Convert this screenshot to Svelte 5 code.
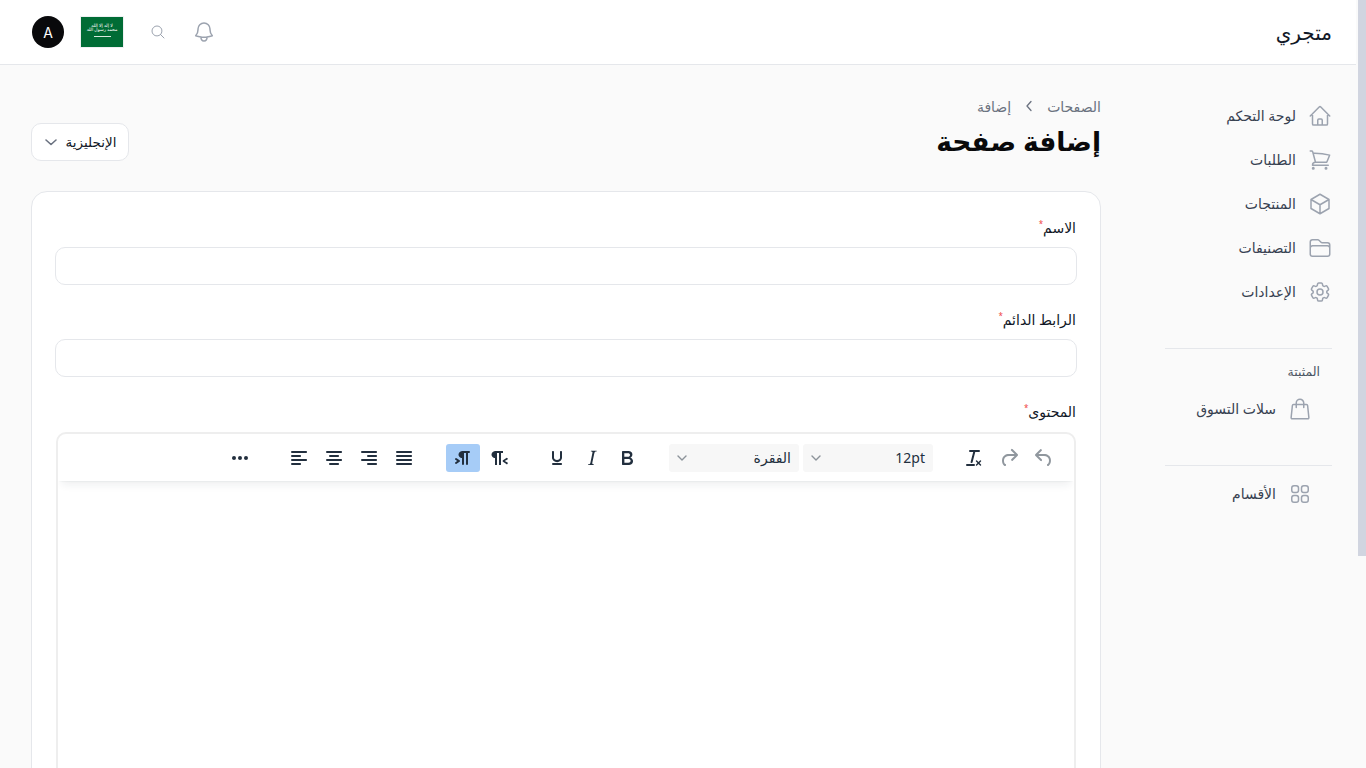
<script>
	const nav = [
		{ label: 'لوحة التحكم', d: 'm2.25 12 8.954-8.955c.44-.439 1.152-.439 1.591 0L21.75 12M4.5 9.75v10.125c0 .621.504 1.125 1.125 1.125H9.75v-4.875c0-.621.504-1.125 1.125-1.125h2.25c.621 0 1.125.504 1.125 1.125V21h4.125c.621 0 1.125-.504 1.125-1.125V9.75M8.25 21h8.25' },
		{ label: 'الطلبات', d: 'M2.25 3h1.386c.51 0 .955.343 1.087.835l.383 1.437M7.5 14.25a3 3 0 0 0-3 3h15.75m-12.75-3h11.218c1.121-2.3 2.1-4.684 2.924-7.138a60.114 60.114 0 0 0-16.536-1.84M7.5 14.25 5.106 5.272M6 20.25a.75.75 0 1 1-1.5 0 .75.75 0 0 1 1.5 0Zm12.75 0a.75.75 0 1 1-1.5 0 .75.75 0 0 1 1.5 0Z' },
		{ label: 'المنتجات', d: 'm21 7.5-9-5.25L3 7.5m18 0-9 5.25m9-5.25v9l-9 5.25M3 7.5l9 5.25M3 7.5v9l9 5.25m0-9v9' },
		{ label: 'التصنيفات', d: 'M2.25 12.75V12A2.25 2.25 0 0 1 4.5 9.75h15A2.25 2.25 0 0 1 21.75 12v.75m-8.69-6.44-2.12-2.12a1.5 1.5 0 0 0-1.061-.44H4.5A2.25 2.25 0 0 0 2.25 6v12a2.25 2.25 0 0 0 2.25 2.25h15A2.25 2.25 0 0 0 21.75 18V9a2.25 2.25 0 0 0-2.25-2.25h-5.379a1.5 1.5 0 0 1-1.06-.44Z' },
		{ label: 'الإعدادات', d: 'M9.594 3.94c.09-.542.56-.94 1.11-.94h2.593c.55 0 1.02.398 1.11.94l.213 1.281c.063.374.313.686.645.87.074.04.147.083.22.127.325.196.72.257 1.075.124l1.217-.456a1.125 1.125 0 0 1 1.37.49l1.296 2.247a1.125 1.125 0 0 1-.26 1.431l-1.003.827c-.293.241-.438.613-.43.992a7.723 7.723 0 0 1 0 .255c-.008.378.137.75.43.991l1.004.827c.424.35.534.955.26 1.43l-1.298 2.247a1.125 1.125 0 0 1-1.369.491l-1.217-.456c-.355-.133-.75-.072-1.076.124a6.47 6.47 0 0 1-.22.128c-.331.183-.581.495-.644.869l-.213 1.281c-.09.543-.56.94-1.11.94h-2.594c-.55 0-1.019-.398-1.11-.94l-.213-1.281c-.062-.374-.312-.686-.644-.87a6.52 6.52 0 0 1-.22-.127c-.325-.196-.72-.257-1.076-.124l-1.217.456a1.125 1.125 0 0 1-1.369-.49l-1.297-2.247a1.125 1.125 0 0 1 .26-1.431l1.004-.827c.292-.24.437-.613.43-.991a6.932 6.932 0 0 1 0-.255c.007-.38-.138-.751-.43-.992l-1.004-.827a1.125 1.125 0 0 1-.26-1.43l1.297-2.247a1.125 1.125 0 0 1 1.37-.491l1.216.456c.356.133.751.072 1.076-.124.072-.044.146-.086.22-.128.332-.183.582-.495.644-.869l.214-1.28Z M15 12a3 3 0 1 1-6 0 3 3 0 0 1 6 0Z' }
	];
	const bag = 'M15.75 10.5V6a3.75 3.75 0 1 0-7.5 0v4.5m11.356-1.993 1.263 12c.07.665-.45 1.243-1.119 1.243H4.25a1.125 1.125 0 0 1-1.12-1.243l1.264-12A1.125 1.125 0 0 1 5.513 7.5h12.974c.576 0 1.059.435 1.119 1.007Z';
	const squares = 'M3.75 6A2.25 2.25 0 0 1 6 3.75h2.25A2.25 2.25 0 0 1 10.5 6v2.25a2.25 2.25 0 0 1-2.25 2.25H6a2.25 2.25 0 0 1-2.25-2.25V6ZM3.75 15.75A2.25 2.25 0 0 1 6 13.5h2.25a2.25 2.25 0 0 1 2.25 2.25V18a2.25 2.25 0 0 1-2.25 2.25H6A2.25 2.25 0 0 1 3.75 18v-2.25ZM13.5 6a2.25 2.25 0 0 1 2.25-2.25H18A2.25 2.25 0 0 1 20.25 6v2.25A2.25 2.25 0 0 1 18 10.5h-2.25a2.25 2.25 0 0 1-2.25-2.25V6ZM13.5 15.75a2.25 2.25 0 0 1 2.25-2.25H18a2.25 2.25 0 0 1 2.25 2.25V18A2.25 2.25 0 0 1 18 20.25h-2.25A2.25 2.25 0 0 1 13.5 18v-2.25Z';

	// editor toolbar, tinymce icons, 24 grid
	const history = [
		{ d: 'M6.4 8H12c3.7 0 6.2 2 6.8 5.1.6 2.7-.4 5.6-2.3 6.8a1 1 0 0 1-1-1.8c1.1-.6 1.8-2.7 1.4-4.6-.5-2.1-2.1-3.5-4.9-3.5H6.4l3.3 3.3a1 1 0 1 1-1.4 1.4l-5-5a1 1 0 0 1 0-1.4l5-5a1 1 0 0 1 1.4 1.4L6.4 8Z', off: true },
		{ d: 'M17.6 10H12c-2.8 0-4.4 1.4-4.9 3.5-.4 2 .3 4 1.4 4.6a1 1 0 1 1-1 1.8c-2-1.2-2.9-4.1-2.3-6.8.6-3 3-5.1 6.8-5.1h5.6l-3.3-3.3a1 1 0 1 1 1.4-1.4l5 5a1 1 0 0 1 0 1.4l-5 5a1 1 0 0 1-1.4-1.4l3.3-3.3Z', off: true },
		{ d: 'M13.2 6a1 1 0 0 1 0 .2l-2.6 10a1 1 0 0 1-1 .8h-.2a.8.8 0 0 1-.8-1l2.6-10H8a1 1 0 1 1 0-2h9a1 1 0 0 1 0 2h-3.8ZM5 18h7a1 1 0 0 1 0 2H5a1 1 0 0 1 0-2Zm13 1.5L16.5 18 15 19.5a.7.7 0 0 1-1-1l1.5-1.5-1.5-1.5a.7.7 0 0 1 1-1l1.5 1.5 1.5-1.5a.7.7 0 0 1 1 1L17.5 17l1.5 1.5a.7.7 0 0 1-1 1Z' }
	];
	const inline = [
		{ d: 'M7.8 19c-.3 0-.5 0-.6-.2l-.2-.5V5.7c0-.2 0-.4.2-.5l.6-.2h5c1.5 0 2.7.3 3.5 1 .7.6 1.1 1.4 1.1 2.5a3 3 0 0 1-.6 1.9c-.4.6-1 1-1.6 1.2.4.1.9.3 1.3.6s.8.7 1 1.2c.4.4.5 1 .5 1.6 0 1.3-.4 2.3-1.3 3-.8.7-2.1 1-3.8 1H7.8Zm5-8.3c.6 0 1.2-.1 1.6-.5.4-.3.6-.7.6-1.3 0-1.1-.8-1.7-2.3-1.7H9.3v3.5h3.4Zm.5 6c.7 0 1.3-.1 1.7-.4.4-.4.6-.9.6-1.5s-.2-1-.7-1.4c-.4-.3-1-.4-2-.4H9.4v3.8h4Z' },
		{ d: 'M16.7 4.7l-.1.9h-.3c-.6 0-1 0-1.4.3-.3.3-.4.6-.5 1.1l-2.1 9.8v.6c0 .5.4.8 1.4.8h.2l-.2.8H8l.2-.8h.2c1.1 0 1.8-.5 2-1.5l2-9.8.1-.5c0-.6-.4-.8-1.4-.8h-.3l.2-.9h5.8Z' },
		{ d: 'M16 5c.6 0 1 .4 1 1v5.5a4 4 0 0 1-.4 1.8l-1 1.4a5.3 5.3 0 0 1-5.5 1 5 5 0 0 1-1.6-1c-.5-.4-.8-.9-1.1-1.4a4 4 0 0 1-.4-1.8V6c0-.6.4-1 1-1s1 .4 1 1v5.5c0 .3 0 .6.2 1l.6.7a3.3 3.3 0 0 0 2.2.8 3.4 3.4 0 0 0 2.2-.8c.3-.2.4-.5.6-.8l.2-.9V6c0-.6.4-1 1-1ZM8 17h8c.6 0 1 .4 1 1s-.4 1-1 1H8a1 1 0 0 1 0-2Z' }
	];
	const direction = [
		{ d: 'M8 5h8v2h-2v12h-2V7h-2v12H8v-7c-.5 0-1 0-1.4-.3A3.4 3.4 0 0 1 4.8 10a3.3 3.3 0 0 1 0-2.8 3.4 3.4 0 0 1 1.8-1.8L8 5Zm12 11.2a1 1 0 1 1-1 1.6l-3-2a1 1 0 0 1 0-1.6l3-2a1 1 0 1 1 1 1.6L17.7 15l2.3 1.2Z' },
		{ d: 'M11 5h7a1 1 0 0 1 0 2h-1v11a1 1 0 0 1-2 0V7h-2v11a1 1 0 0 1-2 0v-6c-.5 0-1 0-1.4-.3A3.4 3.4 0 0 1 7.8 10a3.3 3.3 0 0 1 0-2.8 3.4 3.4 0 0 1 1.8-1.8L11 5ZM4.4 16.2 6.2 15l-1.8-1.2a1 1 0 0 1 1.2-1.6l3 2a1 1 0 0 1 0 1.6l-3 2a1 1 0 1 1-1.2-1.6Z', active: true }
	];
	const align = [
		{ d: 'M5 5h14c.6 0 1 .4 1 1s-.4 1-1 1H5a1 1 0 1 1 0-2Zm0 4h14c.6 0 1 .4 1 1s-.4 1-1 1H5a1 1 0 1 1 0-2Zm0 4h14c.6 0 1 .4 1 1s-.4 1-1 1H5a1 1 0 0 1 0-2Zm0 4h14c.6 0 1 .4 1 1s-.4 1-1 1H5a1 1 0 0 1 0-2Z' },
		{ d: 'M5 5h14c.6 0 1 .4 1 1s-.4 1-1 1H5a1 1 0 1 1 0-2Zm6 4h8c.6 0 1 .4 1 1s-.4 1-1 1h-8a1 1 0 0 1 0-2Zm0 8h8c.6 0 1 .4 1 1s-.4 1-1 1h-8a1 1 0 0 1 0-2Zm-6-4h14c.6 0 1 .4 1 1s-.4 1-1 1H5a1 1 0 0 1 0-2Z' },
		{ d: 'M5 5h14c.6 0 1 .4 1 1s-.4 1-1 1H5a1 1 0 1 1 0-2Zm3 4h8c.6 0 1 .4 1 1s-.4 1-1 1H8a1 1 0 1 1 0-2Zm0 8h8c.6 0 1 .4 1 1s-.4 1-1 1H8a1 1 0 0 1 0-2Zm-3-4h14c.6 0 1 .4 1 1s-.4 1-1 1H5a1 1 0 0 1 0-2Z' },
		{ d: 'M5 5h14c.6 0 1 .4 1 1s-.4 1-1 1H5a1 1 0 1 1 0-2Zm0 4h8c.6 0 1 .4 1 1s-.4 1-1 1H5a1 1 0 1 1 0-2Zm0 8h8c.6 0 1 .4 1 1s-.4 1-1 1H5a1 1 0 0 1 0-2Zm0-4h14c.6 0 1 .4 1 1s-.4 1-1 1H5a1 1 0 0 1 0-2Z' }
	];
	const more = 'M6 10a2 2 0 0 0-2 2c0 1.1.9 2 2 2a2 2 0 0 0 2-2 2 2 0 0 0-2-2Zm12 0a2 2 0 0 0-2 2c0 1.1.9 2 2 2a2 2 0 0 0 2-2 2 2 0 0 0-2-2Zm-6 0a2 2 0 0 0-2 2c0 1.1.9 2 2 2a2 2 0 0 0 2-2 2 2 0 0 0-2-2Z';
</script>

{#snippet outline(d, size)}
	<svg class="outline" width={size} height={size} viewBox="0 0 24 24" fill="none" stroke="currentColor" stroke-width="1.5" stroke-linecap="round" stroke-linejoin="round"><path {d} /></svg>
{/snippet}

{#snippet tbtn(b)}
	<button class="tbtn" class:active={b.active} class:off={b.off} type="button">
		<svg width="24" height="24" viewBox="0 0 24 24" fill="currentColor"><path d={b.d} /></svg>
	</button>
{/snippet}

{#snippet chevron()}
	<svg class="chev" width="10" height="10" viewBox="0 0 10 10" fill="none" stroke="currentColor" stroke-width="1.4" stroke-linecap="round" stroke-linejoin="round"><path d="M1 3l4 4 4-4" /></svg>
{/snippet}

<div class="page" dir="rtl">
	<header class="topbar">
		<span class="brand">متجري</span>
		<div class="actions">
			<span class="bell">{@render outline('M14.857 17.082a23.848 23.848 0 0 0 5.454-1.31A8.967 8.967 0 0 1 18 9.75V9A6 6 0 0 0 6 9v.75a8.967 8.967 0 0 1-2.312 6.022c1.733.64 3.56 1.085 5.455 1.31m5.714 0a24.255 24.255 0 0 1-5.714 0m5.714 0a3 3 0 1 1-5.714 0', 24)}</span>
			<span class="search">{@render outline('m21 21-5.197-5.197m0 0A7.5 7.5 0 1 0 5.196 5.196a7.5 7.5 0 0 0 10.607 10.607Z', 16)}</span>
			<span class="flag">
				<span class="shahada">لا إله إلا الله<br />محمد رسول الله</span>
				<span class="sword"></span>
			</span>
			<span class="avatar">A</span>
		</div>
	</header>

	<div class="layout">
		<aside class="sidebar">
			<nav class="nav">
				{#each nav as item}
					<a class="nav-item" href="#top">
						{@render outline(item.d, 24)}
						<span>{item.label}</span>
					</a>
				{/each}
			</nav>
			<hr />
			<div class="pinned">
				<div class="pinned-title">المثبتة</div>
				<a class="nav-item sub" href="#top">
					{@render outline(bag, 24)}
					<span>سلات التسوق</span>
				</a>
			</div>
			<hr class="second" />
			<a class="nav-item sub" href="#top">
				{@render outline(squares, 24)}
				<span>الأقسام</span>
			</a>
		</aside>

		<main class="main">
			<div class="head">
				<div>
					<div class="crumbs">
						<span>الصفحات</span>
						<svg width="16" height="16" viewBox="0 0 16 16" fill="none" stroke="currentColor" stroke-width="1.3" stroke-linecap="round" stroke-linejoin="round"><path d="M10 3.5 6 8l4 4.5" /></svg>
						<span>إضافة</span>
					</div>
					<h1>إضافة صفحة</h1>
				</div>
				<button class="lang" type="button">
					<span>الإنجليزية</span>
					<svg width="14" height="14" viewBox="0 0 14 14" fill="none" stroke="#6b7280" stroke-width="1.6" stroke-linecap="round" stroke-linejoin="round"><path d="M2 5l5 4.5L12 5" /></svg>
				</button>
			</div>

			<section class="card">
				<label class="field">
					<span class="label">الاسم<i>*</i></span>
					<input type="text" />
				</label>
				<label class="field">
					<span class="label">الرابط الدائم<i>*</i></span>
					<input type="text" />
				</label>
				<div class="field">
					<span class="label">المحتوى<i>*</i></span>
					<div class="editor">
						<div class="toolbar">
							<div class="group">
								{#each history as b}{@render tbtn(b)}{/each}
							</div>
							<div class="group selects">
								<div class="select size"><span>12pt</span>{@render chevron()}</div>
								<div class="select"><span>الفقرة</span>{@render chevron()}</div>
							</div>
							<div class="group sep">
								{#each inline as b}{@render tbtn(b)}{/each}
							</div>
							<div class="group dir">
								{#each direction as b}{@render tbtn(b)}{/each}
							</div>
							<div class="group sep">
								{#each align as b}{@render tbtn(b)}{/each}
							</div>
							<div class="group sep">
								{@render tbtn({ d: more })}
							</div>
						</div>
						<div class="body"></div>
					</div>
				</div>
			</section>
		</main>
	</div>
</div>
<div class="scrollbar"></div>

<style>
	:global(body) {
		background: #fafafa;
		font-family: 'Noto Sans', 'DejaVu Sans', sans-serif;
	}

	.page {
		color: #111827;
		padding-right: 10px;
	}
	/* the page's scrollbar, which the headless browser does not paint */
	.scrollbar {
		position: fixed;
		top: 0;
		right: 0;
		width: 8px;
		height: 556px;
		background: #d1d5e0;
	}

	.topbar {
		height: 64px;
		display: flex;
		align-items: center;
		justify-content: space-between;
		padding: 0 24px 0 32px;
		background: #fff;
		border-bottom: 1px solid #e5e7eb;
	}
	.brand {
		font-size: 20px;
		font-weight: 500;
	}
	.actions {
		display: flex;
		align-items: center;
	}
	.bell {
		display: flex;
		color: #9ca3af;
		margin-inline-end: 26px;
	}
	.search {
		display: flex;
		color: #6b7280;
		margin-inline-end: 26px;
	}
	.flag {
		width: 44px;
		height: 32px;
		margin-inline-end: 16px;
		background: #006c35;
		border: 1px solid #eef0f2;
		box-sizing: border-box;
		display: flex;
		flex-direction: column;
		align-items: center;
		gap: 5px;
		padding-top: 6px;
	}
	.shahada {
		color: #fff;
		font-size: 4.5px;
		line-height: 4px;
		white-space: nowrap;
		text-align: center;
	}
	.sword {
		width: 17px;
		height: 1px;
		background: #d8e8de;
	}
	.avatar {
		width: 32px;
		height: 32px;
		border-radius: 50%;
		background: #09090b;
		color: #fff;
		display: flex;
		align-items: center;
		justify-content: center;
		font-family: Inter, sans-serif;
		font-size: 14px;
	}

	.layout {
		display: flex;
		gap: 64px;
		padding-inline-start: 24px;
		padding-inline-end: 31px;
	}
	.sidebar {
		width: 167px;
		flex: none;
		padding-top: 33px;
	}
	.nav {
		display: flex;
		flex-direction: column;
		gap: 8px;
	}
	.nav-item {
		height: 36px;
		display: flex;
		align-items: center;
		gap: 12px;
		color: #374151;
		text-decoration: none;
		font-size: 14px;
	}
	.nav-item span {
		padding-bottom: 2px;
	}
	.outline {
		color: #9ca3af;
		flex: none;
	}
	.sidebar hr {
		border: 0;
		border-top: 1px solid #e5e7eb;
		margin: 38px 0 0;
	}
	.sidebar hr.second {
		margin-top: 38px;
	}
	.pinned-title {
		font-size: 12.5px;
		font-weight: 500;
		color: #4b5563;
		margin: 15px 12px 0 0;
		line-height: 16px;
	}
	.sub {
		padding-inline-start: 20px;
	}
	.pinned .sub {
		margin-top: 11px;
	}
	hr.second + .sub {
		margin-top: 10px;
	}

	.main {
		flex: 1;
		min-width: 0;
		padding-top: 29px;
		padding-bottom: 32px;
	}
	.head {
		display: flex;
		align-items: flex-end;
		justify-content: space-between;
	}
	.crumbs {
		display: flex;
		align-items: center;
		gap: 10px;
		font-size: 14px;
		color: #6b7280;
		height: 24px;
	}
	.crumbs svg {
		color: #6b7280;
	}
	h1 {
		margin: 5px 0 2px;
		font-size: 26.5px;
		line-height: 36px;
		font-weight: 700;
		color: #09090b;
	}
	.lang {
		width: 98px;
		height: 38px;
		display: flex;
		align-items: center;
		justify-content: center;
		gap: 8px;
		background: #fff;
		border: 1px solid #e5e7eb;
		border-radius: 10px;
		font: inherit;
		font-size: 13.5px;
		color: #111827;
		padding: 0;
	}

	.card {
		margin-top: 30px;
		background: #fff;
		border: 1px solid #e5e7eb;
		border-radius: 16px;
		padding: 27px 23px 24px;
		display: flex;
		flex-direction: column;
		gap: 26px;
	}
	.field {
		display: block;
	}
	.label {
		display: block;
		font-size: 14px;
		line-height: 18px;
		color: #111827;
		margin-bottom: 10px;
		padding-inline-start: 1px;
	}
	.label i {
		color: #ef4444;
		font-style: normal;
		font-size: 8px;
		vertical-align: super;
		line-height: 0;
	}
	input {
		display: block;
		width: 100%;
		height: 38px;
		box-sizing: border-box;
		background: #fff;
		border: 1px solid #e5e7eb;
		border-radius: 10px;
	}

	.editor {
		margin: 11px 1px 0;
		border: 2px solid #eee;
		border-radius: 10px;
		background: #fff;
		overflow: hidden;
	}
	.toolbar {
		height: 47px;
		display: flex;
		align-items: center;
		gap: 24px;
		padding-inline-start: 13px;
		box-shadow: 0 2px 2px -2px rgba(34, 47, 62, 0.1), 0 8px 8px -4px rgba(34, 47, 62, 0.07);
		position: relative;
	}
	.group {
		display: flex;
		gap: 1px;
	}
	.group.sep {
		margin-inline-start: 1px;
	}
	.dir {
		gap: 2px;
	}
	.selects {
		gap: 4px;
	}
	.tbtn {
		width: 34px;
		height: 28px;
		border: 0;
		border-radius: 3px;
		background: transparent;
		color: #222f3e;
		padding: 0;
		display: flex;
		align-items: center;
		justify-content: center;
	}
	.tbtn.off {
		color: rgba(34, 47, 62, 0.5);
	}
	.tbtn.active {
		background: #a6ccf7;
	}
	.select {
		width: 130px;
		height: 28px;
		box-sizing: border-box;
		border-radius: 3px;
		background: #f7f7f7;
		display: flex;
		align-items: center;
		justify-content: space-between;
		padding: 0 8px;
		font-size: 14px;
		color: #222f3e;
	}
	.chev {
		color: rgba(34, 47, 62, 0.5);
	}
	.body {
		height: 530px;
	}
</style>
